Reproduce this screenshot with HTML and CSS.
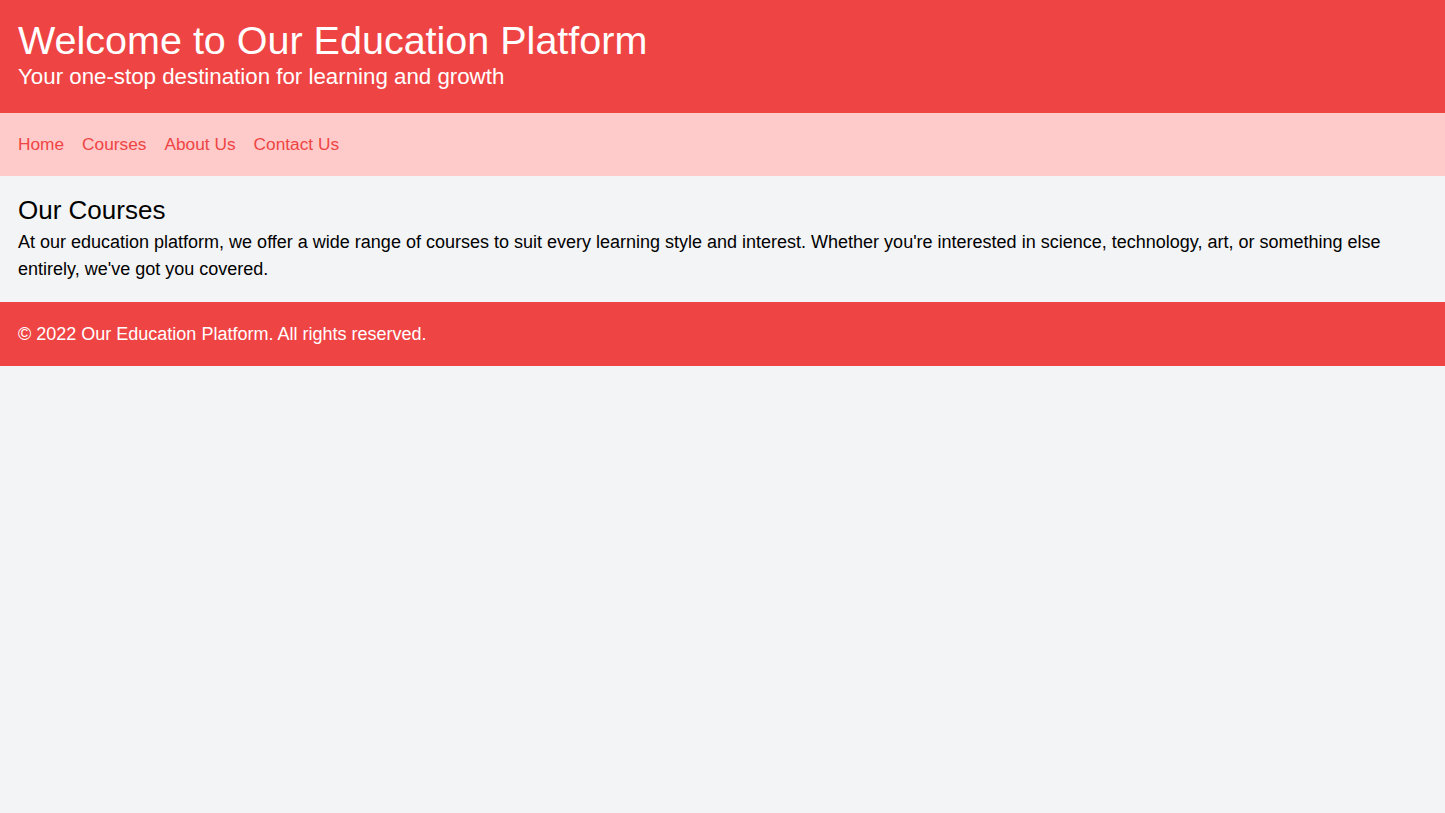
FILE: index.html
```html
<!DOCTYPE html>
<html lang="en">
<head>
    <meta charset="UTF-8">
    <meta name="viewport" content="width=device-width, initial-scale=1.0">
    <title>Our Education Platform</title>
    <link rel="stylesheet" href="styles.css">
</head>
<body>
    <header class="site-header">
        <h1>Welcome to Our Education Platform</h1>
        <p>Your one-stop destination for learning and growth</p>
    </header>
    <nav class="site-nav">
        <ul>
            <li><a href="#">Home</a></li>
            <li><a href="#">Courses</a></li>
            <li><a href="#">About Us</a></li>
            <li><a href="#">Contact Us</a></li>
        </ul>
    </nav>
    <main class="content">
        <h2>Our Courses</h2>
        <p>At our education platform, we offer a wide range of courses to suit every learning style and interest. Whether you're interested in science, technology, art, or something else entirely, we've got you covered.</p>
    </main>
    <footer class="site-footer">
        <p>&copy; 2022 Our Education Platform. All rights reserved.</p>
    </footer>
</body>
</html>
```

FILE: styles.css
```css
* {
    box-sizing: border-box;
}
body {
    margin: 0;
    font-family: "Liberation Sans", Arial, sans-serif;
    background-color: #f3f4f6;
    color: #000;
}
.site-header {
    background-color: #ef4444;
    color: #fff;
    padding: 18px 18px 21px;
}
.site-header h1 {
    margin: 0;
    font-size: 39.5px;
    font-weight: 400;
    line-height: 44px;
}
.site-header p {
    margin: 0;
    font-size: 22.3px;
    line-height: 30px;
}
.site-nav {
    background-color: #fecaca;
    padding: 17px 18px 18px;
}
.site-nav ul {
    list-style: none;
    margin: 0;
    padding: 0;
    display: flex;
    gap: 18px;
}
.site-nav a {
    color: #ef4444;
    text-decoration: none;
    font-size: 17.3px;
    line-height: 28px;
}
.content {
    padding: 18px 18px 19px;
}
.content h2 {
    margin: 0 0 3px;
    font-size: 26px;
    font-weight: 400;
    line-height: 32px;
}
.content p {
    margin: 0;
    font-size: 18px;
    line-height: 27px;
}
.site-footer {
    background-color: #ef4444;
    color: #fff;
    padding: 18px;
}
.site-footer p {
    margin: 0;
    font-size: 18px;
    line-height: 28px;
}
```
